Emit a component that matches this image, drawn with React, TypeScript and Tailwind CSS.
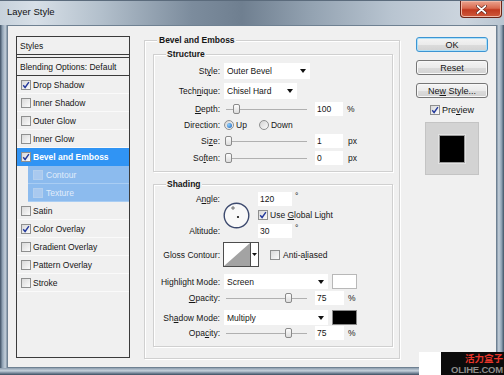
import type { ReactNode } from "react";

function Check({ on, faded }: { on?: boolean; faded?: boolean }) {
  return (
    <span
      className={`flex h-[10px] w-[10px] shrink-0 items-center justify-center border ${
        faded
          ? "border-[#b3cfee] bg-[#a9c9ef]"
          : "border-[#8e8f8f] bg-gradient-to-br from-[#d9d9d9] to-[#fbfbfb]"
      }`}
    >
      {on && (
        <svg width="8" height="8" viewBox="0 0 8 8">
          <path d="M1.2 4.2 3.1 6.5 6.9 1.1" fill="none" stroke="#23399c" strokeWidth="1.4" />
        </svg>
      )}
    </span>
  );
}

function Radio({ on }: { on?: boolean }) {
  return (
    <span className="flex h-[10px] w-[10px] shrink-0 items-center justify-center rounded-full border border-[#8e8f8f] bg-gradient-to-br from-[#d4d4d4] to-[#fbfbfb]">
      {on && <span className="h-[5px] w-[5px] rounded-full bg-[radial-gradient(circle_at_35%_35%,#8fd0ff,#1b5fb6)]" />}
    </span>
  );
}

function Caret() {
  return (
    <svg width="6" height="4" viewBox="0 0 6 4">
      <path d="M0 0h6L3 4z" fill="#111" />
    </svg>
  );
}

function Select({ value, w }: { value: string; w: string }) {
  return (
    <div className={`flex h-[16px] ${w} items-center justify-between bg-white pl-[3px] pr-[4px]`}>
      <span>{value}</span>
      <Caret />
    </div>
  );
}

function Field({ v, w }: { v: string; w: string }) {
  return <span className={`flex h-[14px] ${w} items-center bg-white pl-[2px]`}>{v}</span>;
}

function Slider({ at }: { at: number }) {
  return (
    <div className="relative h-[12px] w-[83px]">
      <div className="absolute left-[2px] right-0 top-[6px] h-px bg-[#b0b0b0]" />
      <span
        className="absolute top-[1px] h-[10px] w-[7px] rounded-[2px] border border-[#8a8a8a] bg-gradient-to-b from-[#fdfdfd] to-[#dcdcdc]"
        style={{ left: at - 3.5 }}
      />
    </div>
  );
}

function Row({ label, h, children }: { label: ReactNode; h: string; children: ReactNode }) {
  return (
    <div className={`flex ${h} items-center`}>
      <span className="w-[66px] shrink-0 text-right">{label}</span>
      <div className="ml-[4px] flex items-center">{children}</div>
    </div>
  );
}

const rows = [
  { t: "Drop Shadow", on: true },
  { t: "Inner Shadow" },
  { t: "Outer Glow" },
  { t: "Inner Glow" },
  { t: "Bevel and Emboss", on: true, sel: true },
  { t: "Contour", sub: true },
  { t: "Texture", sub: true },
  { t: "Satin" },
  { t: "Color Overlay", on: true },
  { t: "Gradient Overlay" },
  { t: "Pattern Overlay" },
  { t: "Stroke" },
];

function StylesList() {
  return (
    <div className="flex h-[322px] w-[114px] shrink-0 flex-col border border-[#3b3b3b] bg-[#f0f0f0]">
      <div className="flex h-[18px] shrink-0 items-center border-b border-[#3b3b3b] pl-[3px]">Styles</div>
      <div className="h-[2px] shrink-0" />
      <div className="flex h-[19px] shrink-0 items-center border-y border-[#3b3b3b] pl-[3px]">
        Blending Options: Default
      </div>
      {rows.map((r) =>
        r.sub ? (
          <div key={r.t} className="flex h-[18px] shrink-0 pl-[11px]">
            <div className="flex flex-1 items-center gap-[3px] border-b border-[#a9cdf3] bg-[#8cbbee] pl-[5px] text-[#e0ecfa]">
              <Check faded />
              <span>{r.t}</span>
            </div>
          </div>
        ) : (
          <div
            key={r.t}
            className={`flex h-[18px] shrink-0 items-center gap-[2px] border-b pl-[4px] ${
              r.sel ? "border-[#3094f4] bg-[#3094f4] font-bold text-white" : "border-[#fafafa]"
            }`}
          >
            <Check on={r.on} />
            <span>{r.t}</span>
          </div>
        )
      )}
    </div>
  );
}

function Legend({ children }: { children: ReactNode }) {
  return (
    <span className="absolute left-[12px] top-[-7px] bg-[#f0f0f0] px-[1px] font-bold leading-[12px]">
      {children}
    </span>
  );
}

function Structure() {
  return (
    <div className="relative ml-[8px] mt-[13px] h-[118px] w-[240px] border border-[#d0d0d0] shadow-[inset_1px_1px_0_#fff,1px_1px_0_#fff]">
      <Legend>Structure</Legend>
      <div className="flex flex-col pt-[8px]">
        <Row label={<>St<u>y</u>le:</>} h="h-[16px]">
          <Select value="Outer Bevel" w="w-[86px]" />
        </Row>
        <div className="mt-[4px]">
          <Row label={<>Tech<u>n</u>ique:</>} h="h-[16px]">
            <Select value="Chisel Hard" w="w-[73px]" />
          </Row>
        </div>
        <div className="mt-[2px]">
          <Row label={<><u>D</u>epth:</>} h="h-[16px]">
            <Slider at={12} />
            <span className="ml-[8px]"><Field v="100" w="w-[28px]" /></span>
            <span className="ml-[4px]">%</span>
          </Row>
        </div>
        <Row label="Direction:" h="h-[16px]">
          <Radio on />
          <span className="ml-[2px]">Up</span>
          <span className="ml-[12px]"><Radio /></span>
          <span className="ml-[2px]">Down</span>
        </Row>
        <Row label={<>Si<u>z</u>e:</>} h="h-[16px]">
          <Slider at={4} />
          <span className="ml-[8px]"><Field v="1" w="w-[28px]" /></span>
          <span className="ml-[5px]">px</span>
        </Row>
        <div className="mt-[1px]">
          <Row label={<>So<u>f</u>ten:</>} h="h-[16px]">
            <Slider at={4} />
            <span className="ml-[8px]"><Field v="0" w="w-[28px]" /></span>
            <span className="ml-[5px]">px</span>
          </Row>
        </div>
      </div>
    </div>
  );
}

function Dial() {
  return (
    <svg width="27" height="27" viewBox="0 0 27 27">
      <circle cx="13.5" cy="13.5" r="12.3" fill="#f9f9f9" stroke="#3d4a6e" strokeWidth="1.4" />
      <circle cx="15" cy="15" r="1.1" fill="#111" />
      <path d="M8 6h4M10 4v4" stroke="#555" strokeWidth="0.8" />
    </svg>
  );
}

function Shading() {
  return (
    <div className="relative ml-[8px] mt-[12px] h-[163px] w-[240px] border border-[#d0d0d0] shadow-[inset_1px_1px_0_#fff,1px_1px_0_#fff]">
      <Legend>Shading</Legend>
      <div className="flex flex-col pt-[6px]">
        <div className="flex h-[48px]">
          <div className="flex w-[66px] shrink-0 flex-col justify-between text-right">
            <span className="flex h-[16px] items-center justify-end"><span>A<u>n</u>gle:</span></span>
            <span className="flex h-[16px] items-center justify-end">Altitude:</span>
          </div>
          <div className="ml-[3px] flex items-center">
            <Dial />
          </div>
          <div className="ml-[8px] flex flex-col">
            <div className="flex h-[16px] items-center">
              <Field v="120" w="w-[34px]" />
              <span className="ml-[3px] self-start leading-[10px]">°</span>
            </div>
            <div className="flex h-[16px] items-center">
              <Check on />
              <span className="ml-[2px]">Use <u>G</u>lobal Light</span>
            </div>
            <div className="flex h-[16px] items-center">
              <Field v="30" w="w-[34px]" />
              <span className="ml-[3px] self-start leading-[10px]">°</span>
            </div>
          </div>
        </div>
        <div className="mt-[3px]">
          <Row label="Gloss Contour:" h="h-[25px]">
            <div className="-ml-[1px] flex h-[25px] border border-[#4d4d4d] bg-white">
              <svg width="26" height="23" viewBox="0 0 26 23">
                <path d="M0 23 26 0v23z" fill="#a3a3a3" />
              </svg>
              <div className="flex w-[8px] items-center justify-center border-l border-[#4d4d4d]">
                <svg width="5" height="3" viewBox="0 0 5 3">
                  <path d="M0 0h5L2.5 3z" fill="#111" />
                </svg>
              </div>
            </div>
            <span className="ml-[11px]"><Check /></span>
            <span className="ml-[3px]">Anti-a<u>l</u>iased</span>
          </Row>
        </div>
        <div className="mt-[7px]">
          <Row label="Highlight Mode:" h="h-[15px]">
            <div className="flex h-[15px] w-[104px] items-center justify-between bg-white pl-[3px] pr-[4px]">
              <span>Screen</span>
              <Caret />
            </div>
            <span className="ml-[4px] h-[15px] w-[25px] border border-[#b8b8b8] bg-white" />
          </Row>
        </div>
        <div className="mt-[2px]">
          <Row label={<><u>O</u>pacity:</>} h="h-[14px]">
            <Slider at={64} />
            <span className="ml-[8px]"><Field v="75" w="w-[29px]" /></span>
            <span className="ml-[4px]">%</span>
          </Row>
        </div>
        <div className="mt-[5px]">
          <Row label={<>Sh<u>a</u>dow Mode:</>} h="h-[15px]">
            <div className="flex h-[15px] w-[104px] items-center justify-between bg-white pl-[3px] pr-[4px]">
              <span>Multiply</span>
              <Caret />
            </div>
            <span className="ml-[4px] h-[15px] w-[25px] border border-[#8a8a8a] bg-black" />
          </Row>
        </div>
        <div className="mt-[1px]">
          <Row label={<>Opa<u>c</u>ity:</>} h="h-[14px]">
            <Slider at={64} />
            <span className="ml-[8px]"><Field v="75" w="w-[29px]" /></span>
            <span className="ml-[4px]">%</span>
          </Row>
        </div>
      </div>
    </div>
  );
}

function Btn({ children, primary }: { children: ReactNode; primary?: boolean }) {
  return (
    <div
      className={`flex h-[15px] w-[72px] items-center justify-center rounded-[3px] border bg-[linear-gradient(180deg,#f4f4f4_0%,#ebebeb_50%,#dcdcdc_51%,#d2d2d2_100%)] text-[9px] ${
        primary ? "border-[#3c95d3] shadow-[inset_0_0_0_1px_#aee0f8]" : "border-[#767676] shadow-[inset_0_0_0_1px_#f8f8f8]"
      }`}
    >
      <span>{children}</span>
    </div>
  );
}

export default function App() {
  return (
    <div className="relative flex h-[375px] w-[504px] flex-col overflow-hidden font-['Liberation_Sans',Arial,sans-serif] text-[8.5px] leading-[12px] text-[#161616]">
      <div className="flex h-[25px] shrink-0 items-start justify-between border-t border-[#5b6b7c] bg-[linear-gradient(90deg,#c7d2dc_0%,#d7dfe7_7%,#b3c0cc_20%,#7c8c9d_38%,#6f7f90_48%,#94a3b2_62%,#b9c5d1_78%,#ccd5de_92%,#b8c5d1_100%)]">
        <span className="ml-[7px] mt-[5px] text-[9.5px] leading-[12px] text-[#111]">Layer Style</span>
        <div className="mr-[2px] flex h-[17px] w-[42px] items-center justify-center rounded-b-[4px] border border-t-0 border-[#6b2417] bg-[linear-gradient(180deg,#eba48f_0%,#d96a4f_45%,#c0391f_55%,#cf5a3c_100%)] shadow-[inset_0_0_0_1px_#f1b8a6]">
          <svg width="11" height="9" viewBox="0 0 11 9">
            <path d="M1.5 1 9.5 8M9.5 1 1.5 8" stroke="#5b1e14" strokeWidth="3" strokeLinecap="round" />
            <path d="M1.5 1 9.5 8M9.5 1 1.5 8" stroke="#fff" strokeWidth="1.7" strokeLinecap="round" />
          </svg>
        </div>
      </div>
      <div className="flex h-[343px] shrink-0">
        <div className="w-[7px] bg-[linear-gradient(90deg,#3f5164,#8fa1b3_35%,#c3cfda_75%,#8193a5)]" />
        <div className="flex h-[343px] w-[490px] border border-[#6f8192] bg-[#f0f0f0] pl-[8px] pt-[10px]">
          <StylesList />
          <div className="relative ml-[14px] mt-[4px] h-[319px] w-[256px] shrink-0 border border-[#d0d0d0] shadow-[inset_1px_1px_0_#fff,1px_1px_0_#fff]">
            <Legend>
              <span className="ml-[1px]">Bevel and Emboss</span>
            </Legend>
            <Structure />
            <Shading />
          </div>
          <div className="ml-[16px] mt-[1px] flex w-[72px] shrink-0 flex-col items-center">
            <Btn primary>OK</Btn>
            <div className="mt-[8px]"><Btn>Reset</Btn></div>
            <div className="mt-[8px]"><Btn>Ne<u>w</u> Style...</Btn></div>
            <div className="mt-[6px] flex h-[12px] items-center">
              <Check on />
              <span className="ml-[2px] text-[9px]">Pre<u>v</u>iew</span>
            </div>
            <div className="mt-[6px] flex h-[53px] w-[54px] items-center justify-center border border-[#c4c4c4] bg-[#d3d3d3]">
              <div className="h-[28px] w-[26px] border border-[#9a9a9a] bg-black shadow-[0_0_0_1px_#e2e2e2]" />
            </div>
          </div>
        </div>
        <div className="w-[7px] bg-[linear-gradient(90deg,#8193a5,#c3cfda_25%,#8fa1b3_65%,#3f5164)]" />
      </div>
      <div className="h-[7px] shrink-0 bg-[linear-gradient(180deg,#8d9eaf,#c6d1db_40%,#7c8d9f_70%,#3d4e61)]" />
      <div className="absolute bottom-0 right-0 flex h-[23px]">
        <div className="w-[22px] bg-white" />
        <div className="flex w-[63px] flex-col items-end justify-between overflow-hidden bg-[#0b0b0b] pr-[1px]">
          <span className="font-['Noto_Sans_CJK_SC',sans-serif] text-[9.5px] font-bold leading-[12px] text-[#e8352a]">
            活力盒子
          </span>
          <span className="text-[9.5px] font-bold leading-[10px] tracking-[-0.2px] text-[#8c8c8c]">
            OLIHE.COM
          </span>
        </div>
      </div>
    </div>
  );
}
